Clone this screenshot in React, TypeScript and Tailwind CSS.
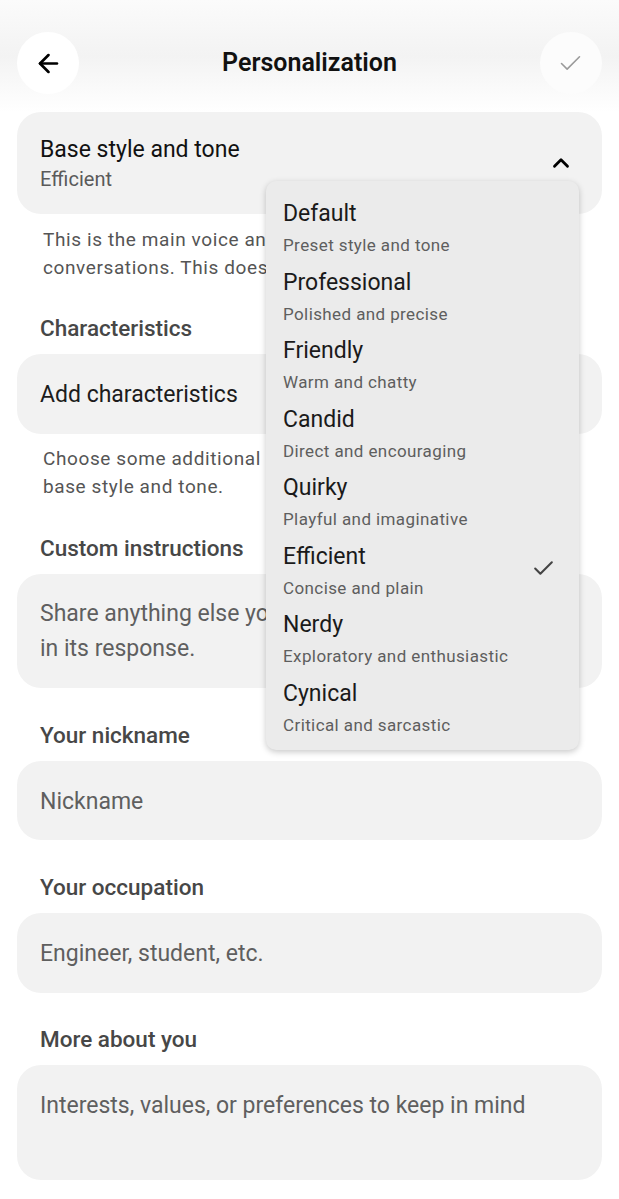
import { ArrowLeft, Check, ChevronUp } from "lucide-react";

const tones = [
  { name: "Default", desc: "Preset style and tone" },
  { name: "Professional", desc: "Polished and precise" },
  { name: "Friendly", desc: "Warm and chatty" },
  { name: "Candid", desc: "Direct and encouraging" },
  { name: "Quirky", desc: "Playful and imaginative" },
  { name: "Efficient", desc: "Concise and plain" },
  { name: "Nerdy", desc: "Exploratory and enthusiastic" },
  { name: "Cynical", desc: "Critical and sarcastic" },
];

function SectionLabel({ children }: { children: React.ReactNode }) {
  return <div className="pl-[23px] text-[22.5px] font-medium leading-[28px] text-[#474747]">{children}</div>;
}

function Field({ children, className = "" }: { children: React.ReactNode; className?: string }) {
  return (
    <div className={`rounded-[24px] bg-[#f2f2f2] px-[23px] text-[23px] text-[#5f5f5f] ${className}`}>
      {children}
    </div>
  );
}

export default function App() {
  const selected = "Efficient";

  return (
    <div
      className="relative min-h-[1199px] w-[619px] overflow-hidden bg-white"
      style={{ fontFamily: "Roboto, 'Noto Sans', sans-serif" }}
    >
      {/* header */}
      <div className="bg-gradient-to-b from-[#fbfbfb] via-[#f3f3f3] to-white px-[17px] pb-[18px] pt-[32px]">
        <div className="flex items-center justify-between">
          <button className="flex h-[62px] w-[62px] items-center justify-center rounded-full bg-white">
            <ArrowLeft size={29} strokeWidth={2.2} className="text-black" />
          </button>
          <h1 className="text-[25px] font-semibold text-[#111]">Personalization</h1>
          <button className="flex h-[62px] w-[62px] items-center justify-center rounded-full bg-[#fcfcfc]">
            <Check size={27} strokeWidth={1.4} className="text-[#9a9a9a]" />
          </button>
        </div>
      </div>

      <div className="flex flex-col px-[17px] pb-[19px]">
        {/* base style */}
        <div className="flex items-center justify-between rounded-[24px] bg-[#f2f2f2] pb-[21px] pl-[23px] pr-[28px] pt-[23px]">
          <div>
            <div className="text-[23px] leading-[30px] text-[#111]">Base style and tone</div>
            <div className="text-[20px] leading-[28px] text-[#5a5a5a]">{selected}</div>
          </div>
          <ChevronUp size={26} strokeWidth={2.6} className="-mt-[2px] text-black" />
        </div>
        <p className="mt-[12px] pl-[26px] pr-[10px] text-[19px] leading-[28px] tracking-[0.6px] text-[#555]">
          This is the main voice and tone ChatGPT uses in
          <br />
          conversations. This doesn't impact capabilities.
        </p>

        <div className="mt-[32px]">
          <SectionLabel>Characteristics</SectionLabel>
        </div>
        <Field className="mt-[12px] flex h-[80px] items-center pt-[2px] !text-[#1c1c1c]">Add characteristics</Field>
        <p className="mt-[11px] pl-[26px] pr-[10px] text-[19px] leading-[28px] tracking-[0.6px] text-[#555]">
          Choose some additional customizations on top of
          <br />
          base style and tone.
        </p>

        <div className="mt-[33px]">
          <SectionLabel>Custom instructions</SectionLabel>
        </div>
        <Field className="mt-[12px] h-[114px] pt-[22px] leading-[35px]">
          Share anything else you'd like ChatGPT to consider
          <br />
          in its response.
        </Field>

        <div className="mt-[33px]">
          <SectionLabel>Your nickname</SectionLabel>
        </div>
        <Field className="mt-[12px] flex h-[79px] items-center pt-[3px]">Nickname</Field>

        <div className="mt-[33px]">
          <SectionLabel>Your occupation</SectionLabel>
        </div>
        <Field className="mt-[12px] flex h-[80px] items-center pt-[3px]">Engineer, student, etc.</Field>

        <div className="mt-[32px]">
          <SectionLabel>More about you</SectionLabel>
        </div>
        <Field className="mt-[12px] h-[115px] pt-[27px] leading-[28px]">
          Interests, values, or preferences to keep in mind
        </Field>
      </div>

      {/* dropdown menu */}
      <div className="absolute left-[266px] top-[181px] w-[313px] rounded-[10px] bg-[#ebebeb] pb-[6px] pt-[15px] shadow-[0_2px_6px_rgba(0,0,0,0.22)]">
        {tones.map((t) => (
          <div key={t.name} className="relative h-[68.5px] pl-[17px] pr-[24px]">
            <div className="text-[23px] leading-[36px] text-[#1a1a1a]">{t.name}</div>
            <div className="-mt-[2px] text-[17px] leading-[30px] tracking-[0.4px] text-[#5e5e5e]">{t.desc}</div>
            {t.name === selected && (
              <Check size={25} strokeWidth={2} className="absolute right-[23px] top-[17px] text-[#444]" />
            )}
          </div>
        ))}
      </div>
    </div>
  );
}
